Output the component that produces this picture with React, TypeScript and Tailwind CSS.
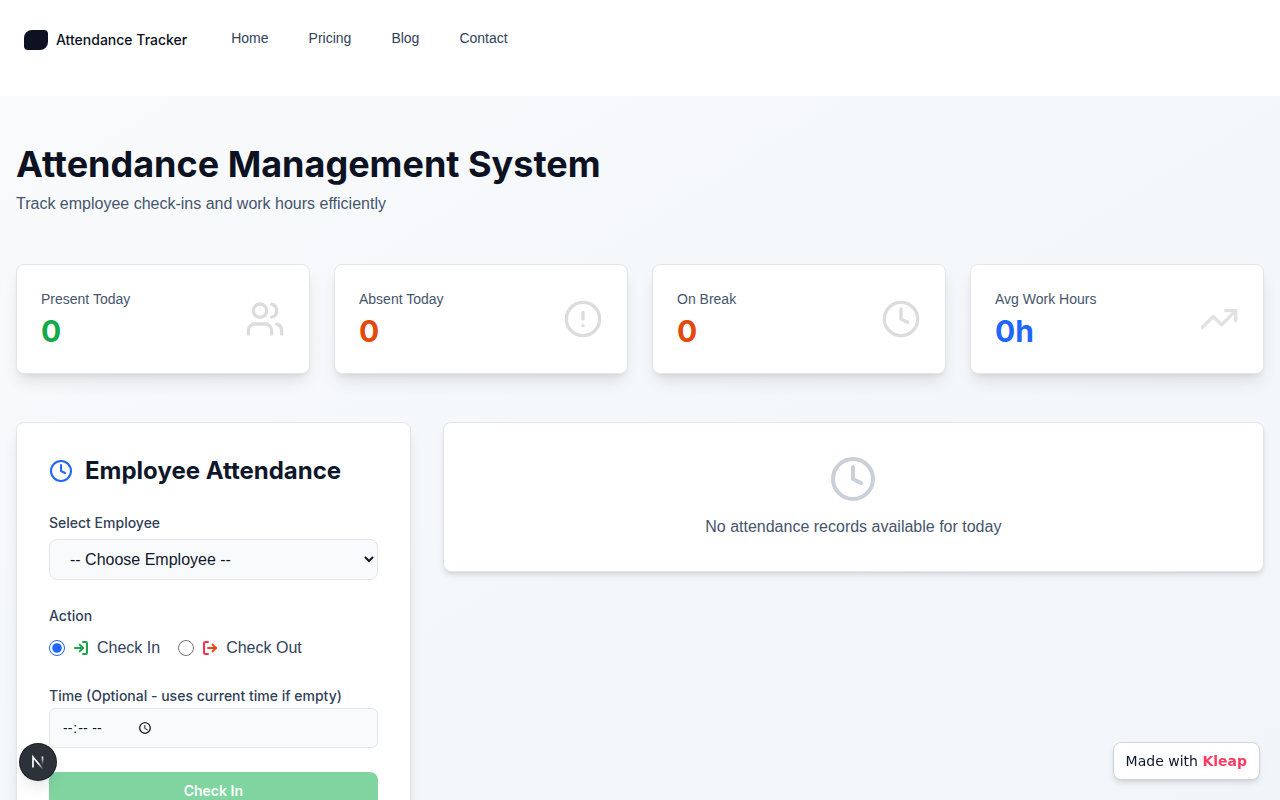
import { useState } from "react";
import {
  CircleAlert,
  Clock,
  LogIn,
  TrendingUp,
  Users,
  type LucideIcon,
} from "lucide-react";

type StatProps = {
  label: string;
  value: string;
  color: string;
  iconColor: string;
  Icon: LucideIcon;
};

const navLinks = ["Home", "Pricing", "Blog", "Contact"];

const stats: StatProps[] = [
  { label: "Present Today", value: "0", color: "text-[#16a94a]", iconColor: "text-[#dcdcdd]", Icon: Users },
  { label: "Absent Today", value: "0", color: "text-[#e5480b]", iconColor: "text-[#dcdcdd]", Icon: CircleAlert },
  { label: "On Break", value: "0", color: "text-[#e5480b]", iconColor: "text-[#dcdcdd]", Icon: Clock },
  { label: "Avg Work Hours", value: "0h", color: "text-[#1f66ff]", iconColor: "text-[#e0e1e3]", Icon: TrendingUp },
];

const Navbar = () => {
  return (
    <header className="h-24 bg-white px-6 pt-7">
      <nav className="flex items-start gap-11">
        <a href="#" className="flex items-center gap-2 pt-0.5">
          <span className="h-5 w-6 rounded-tl-lg rounded-tr-sm rounded-br-lg rounded-bl-sm bg-[#0c1222]" />
          <span className="font-['Inter',sans-serif] text-sm leading-5 font-medium text-[#0c1222]">
            Attendance Tracker
          </span>
        </a>
        <div className="flex gap-10">
          {navLinks.map((link) => (
            <a key={link} href="#" className="text-sm text-slate-700">
              {link}
            </a>
          ))}
        </div>
      </nav>
    </header>
  );
};

const StatCard = ({ label, value, color, iconColor, Icon }: StatProps) => {
  return (
    <div className="flex items-center justify-between rounded-lg border border-[#e2e5ea] bg-white p-6 shadow-lg">
      <div>
        <p className="text-sm text-slate-600">{label}</p>
        <p className={`mt-1 font-['Inter',sans-serif] text-3xl font-bold ${color}`}>
          {value}
        </p>
      </div>
      <Icon className={`size-10 ${iconColor}`} />
    </div>
  );
};

// two-tone log out icon: pink bracket, orange arrow
const CheckOutIcon = () => {
  return (
    <svg
      className="size-4"
      viewBox="0 0 24 24"
      fill="none"
      strokeWidth="3"
      strokeLinecap="round"
      strokeLinejoin="round"
    >
      <path d="M9 21H5a2 2 0 0 1-2-2V5a2 2 0 0 1 2-2h4" stroke="#ff2f5a" />
      <path d="m16 17 5-5-5-5" stroke="#f04416" />
      <path d="M21 12H9" stroke="#f04416" />
    </svg>
  );
};

const AttendanceForm = () => {
  const [action, setAction] = useState("in");

  return (
    <form className="rounded-lg border border-[#e2e5ea] bg-white p-8 shadow-lg">
      <div className="mb-6 flex items-center gap-3">
        <Clock className="size-6 text-[#1f66ff]" />
        <h2 className="font-['Inter',sans-serif] text-2xl font-bold text-slate-900">
          Employee Attendance
        </h2>
      </div>

      <div className="mb-6">
        <label
          htmlFor="employee"
          className="mb-1 block font-['Inter',sans-serif] text-sm leading-6 font-medium text-slate-700"
        >
          Select Employee
        </label>
        <select
          id="employee"
          className="h-[41px] w-full rounded-lg border border-[#e2e5ea] bg-slate-50 px-4 text-base text-slate-900"
        >
          <option>-- Choose Employee --</option>
        </select>
      </div>

      <fieldset className="mb-6">
        <legend className="mb-2 font-['Inter',sans-serif] text-sm leading-6 font-medium text-slate-700">
          Action
        </legend>
        <div className="flex gap-[18px]">
          <label className="flex items-center gap-2 text-slate-700">
            <input
              type="radio"
              name="action"
              className="size-4 accent-[#1f66ff]"
              checked={action === "in"}
              onChange={() => setAction("in")}
            />
            <LogIn className="size-4 text-[#16a94a]" strokeWidth={3} />
            Check In
          </label>
          <label className="flex items-center gap-2 text-slate-700">
            <input
              type="radio"
              name="action"
              className="size-4 accent-[#1f66ff]"
              checked={action === "out"}
              onChange={() => setAction("out")}
            />
            <CheckOutIcon />
            Check Out
          </label>
        </div>
      </fieldset>

      <div className="mb-6">
        <label
          htmlFor="time"
          className="block font-['Inter',sans-serif] text-sm leading-6 font-medium text-slate-700"
        >
          Time (Optional - uses current time if empty)
        </label>
        <div className="flex h-10 items-center rounded-md border border-[#e2e5ea] bg-slate-50 px-3">
          <input
            id="time"
            type="time"
            className="w-[94px] text-sm text-slate-900 outline-none"
          />
        </div>
      </div>

      <button
        type="button"
        className="h-[38px] w-full rounded-lg bg-[#80d49f] font-['Inter',sans-serif] text-sm font-semibold text-white"
      >
        Check In
      </button>
    </form>
  );
};

const App = () => {
  return (
    <div className="font-['Liberation_Sans',sans-serif]">
      <Navbar />

      <main className="bg-linear-to-br from-slate-50 to-slate-100 px-4 py-12">
        <div className="mb-12">
          <h1 className="mb-2 font-['Inter',sans-serif] text-4xl font-bold text-[#0c1222]">
            Attendance Management System
          </h1>
          <p className="text-slate-600">
            Track employee check-ins and work hours efficiently
          </p>
        </div>

        <div className="mb-12 grid grid-cols-4 gap-6">
          {stats.map((stat) => (
            <StatCard key={stat.label} {...stat} />
          ))}
        </div>

        <div className="grid grid-cols-3 items-start gap-8">
          <AttendanceForm />
          <section className="col-span-2 flex flex-col items-center rounded-lg border border-[#e2e5ea] bg-white p-8 shadow-md">
            <Clock className="mb-3 size-12 text-[#cad0d8]" />
            <p className="text-slate-600">
              No attendance records available for today
            </p>
          </section>
        </div>
      </main>

      <button
        type="button"
        aria-label="Open dev tools"
        className="fixed bottom-5 left-5 flex size-9 items-center justify-center rounded-full bg-[#2d3139] shadow-lg ring-1 ring-[#16202f]"
      >
        <svg className="size-4" viewBox="0 0 16 16" fill="none" strokeWidth="1.7">
          <defs>
            <linearGradient id="slant" x1="3" y1="3" x2="12" y2="14" gradientUnits="userSpaceOnUse">
              <stop offset="0.6" stopColor="#fff" />
              <stop offset="1" stopColor="#fff" stopOpacity="0.2" />
            </linearGradient>
            <linearGradient id="stem" x1="11" y1="2" x2="11" y2="11" gradientUnits="userSpaceOnUse">
              <stop stopColor="#fff" />
              <stop offset="1" stopColor="#fff" stopOpacity="0" />
            </linearGradient>
          </defs>
          <path d="M3 13.500V3l9.500 11.500" stroke="url(#slant)" />
          <path d="M12.500 2.500v9" stroke="url(#stem)" />
        </svg>
      </button>

      <a
        href="#"
        className="fixed right-5 bottom-5 rounded-lg border border-slate-300 bg-white px-3 py-2 font-['DejaVu_Sans',sans-serif] text-sm text-slate-900 shadow-md"
      >
        Made with <span className="font-bold text-[#ff3b62]">Kleap</span>
      </a>
    </div>
  );
};

export default App;
